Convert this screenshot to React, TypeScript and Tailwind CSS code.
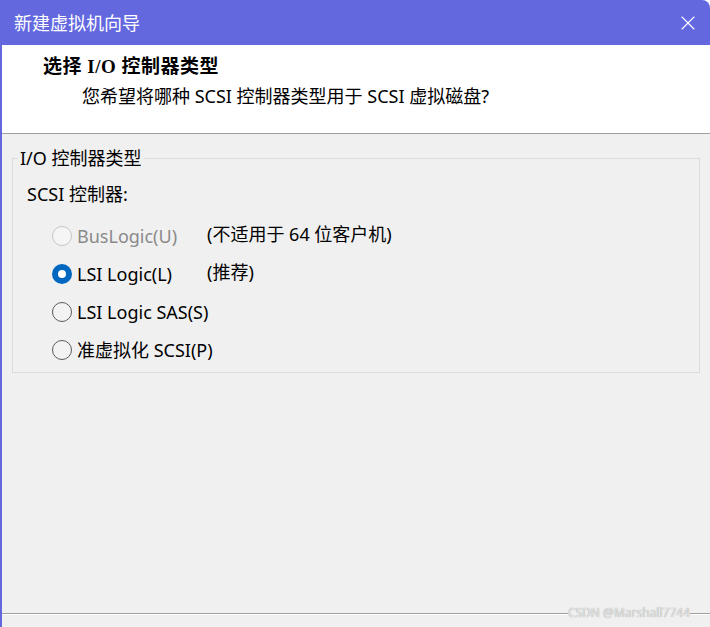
import { X } from 'lucide-react'

const OPTIONS = [
  { label: 'BusLogic(U)', note: '(不适用于 64 位客户机)', disabled: true, checked: false },
  { label: 'LSI Logic(L)', note: '(推荐)', disabled: false, checked: true },
  { label: 'LSI Logic SAS(S)', note: '', disabled: false, checked: false },
  { label: '准虚拟化 SCSI(P)', note: '', disabled: false, checked: false },
]

const Radio = ({ checked, disabled }: { checked: boolean; disabled: boolean }) => {
  if (checked) {
    return (
      <span className="flex h-[20px] w-[20px] shrink-0 items-center justify-center rounded-full bg-[#0067c0]">
        <span className="h-[8px] w-[8px] rounded-full bg-white" />
      </span>
    )
  }
  return (
    <span
      className={
        disabled
          ? 'h-[20px] w-[20px] shrink-0 rounded-full border border-[#c6c6c6] bg-[#f5f5f5]'
          : 'h-[20px] w-[20px] shrink-0 rounded-full border border-[#5c5c5c] bg-[#f3f3f3]'
      }
    />
  )
}

export default function App() {
  return (
    <div className="relative flex h-[627px] w-[710px] flex-col overflow-hidden rounded-tr-lg border-l-2 border-[#6368df] bg-[#f0f0f0] font-['Noto_Sans','Noto_Sans_CJK_SC',sans-serif] text-[18px] text-black">
      <div className="flex h-[45px] shrink-0 items-center justify-between bg-[#6368df] pl-3 pr-[10px] text-white">
        <span className="leading-[24px]">新建虚拟机向导</span>
        <X className="h-[24px] w-[24px]" strokeWidth={1.1} />
      </div>

      <div className="h-[89px] shrink-0 border-b border-[#a0a0a0] bg-white pl-[41px] pt-[10px]">
        <p className="font-['Liberation_Serif','Noto_Sans_CJK_SC',serif] text-[19px] font-bold leading-[24px] tracking-[0.5px]">
          选择 I/O 控制器类型
        </p>
        <p className="mt-[5px] pl-[39px] leading-[24px]">您希望将哪种 SCSI 控制器类型用于 SCSI 虚拟磁盘?</p>
      </div>

      <div className="flex-1">
        <fieldset className="ml-[10px] mr-[10px] mt-[12px] border border-[#dcdcdc] pb-[3px] pl-[5px]">
          <legend className="px-[2px] leading-[24px]">I/O 控制器类型</legend>
          <p className="mt-[12px] pl-[9px] leading-[24px]">SCSI 控制器:</p>
          <div className="mt-[11px]">
            {OPTIONS.map((opt) => (
              <div key={opt.label} className="flex h-[38px] items-center pl-[34px]">
                <Radio checked={opt.checked} disabled={opt.disabled} />
                <span
                  className={
                    opt.disabled
                      ? 'ml-[5px] min-w-[130px] whitespace-nowrap text-[#8a8a8a]'
                      : 'ml-[5px] min-w-[130px] whitespace-nowrap'
                  }
                >
                  {opt.label}
                </span>
                {opt.note && <span className="-mt-[4px] whitespace-nowrap">{opt.note}</span>}
              </div>
            ))}
          </div>
        </fieldset>
      </div>

      <div className="h-[14px] shrink-0 border-t border-[#a0a0a0]">
        <div className="h-px bg-white" />
      </div>

      <span className="absolute bottom-[6px] right-[20px] bg-[#f0f0f0] text-[12px] leading-[16px] text-[#e4e4e4] [text-shadow:0_0_1px_#8c8c8c]">
        CSDN @Marshall7744
      </span>
    </div>
  )
}
